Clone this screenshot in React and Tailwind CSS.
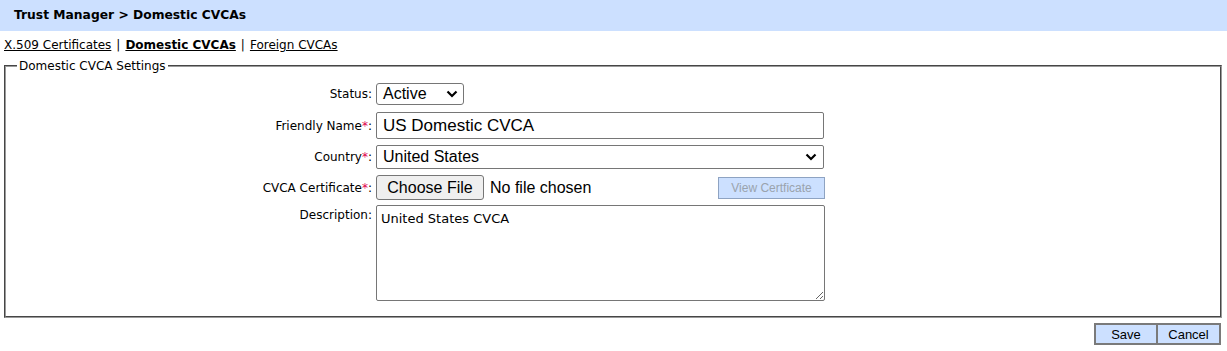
import { useState } from "react";

const labelFont = { fontFamily: "Tahoma, 'DejaVu Sans', sans-serif" };
const arial = { fontFamily: "'Liberation Sans', Arial, sans-serif" };

const Req = () => <span className="text-[#e0004d]">*</span>;

const Row = ({ label, required, top, children }) => (
  <div className={`flex ${top ? "items-start" : "items-center"}`}>
    <div className={`w-[359px] shrink-0 pr-[4px] text-right text-[12px] text-black ${top ? "pt-[1px]" : ""}`}>
      {label}
      {required && <Req />}:
    </div>
    <div className="w-[449px]">{children}</div>
  </div>
);

const Chevron = () => (
  <svg width="12" height="8" viewBox="0 0 12 8" className="shrink-0">
    <path d="M1.5 1.5 L6 6 L10.5 1.5" fill="none" stroke="#000" strokeWidth="2.2" />
  </svg>
);

export default function App() {
  const [name, setName] = useState("US Domestic CVCA");
  const [desc, setDesc] = useState("United States CVCA");

  return (
    <div className="w-[1227px] h-[351px] bg-white" style={labelFont}>
      <div className="h-[31px] bg-[#cce0ff] flex items-center pl-[14px] text-[12.3px] font-bold text-black">
        Trust Manager &gt; Domestic CVCAs
      </div>

      <div className="pl-[4px] pt-[5px] h-[26px] text-[12px] text-black">
        <a className="underline">X.509 Certificates</a>
        <span className="px-[5px]">|</span>
        <a className="underline font-bold">Domestic CVCAs</a>
        <span className="px-[5px]">|</span>
        <a className="underline">Foreign CVCAs</a>
      </div>

      <fieldset className="ml-[4px] mr-[5px] border-2 [border-style:groove] border-[#9a9a9a] px-[11px] pb-[15px] pt-[8px]">
        <legend className="px-[2px] text-[12px] text-black">Domestic CVCA Settings</legend>

        <div className="flex flex-col">
          <Row label="Status">
            <div className="w-[88px] h-[22px] border border-[#767676] rounded-[3px] flex items-center justify-between pl-[6px] pr-[5px] text-[16px]" style={arial}>
              <span>Active</span>
              <Chevron />
            </div>
          </Row>

          <div className="mt-[7px]">
            <Row label="Friendly Name" required>
              <input
                value={name}
                onChange={(e) => setName(e.target.value)}
                className="w-[448px] h-[27px] border border-[#767676] rounded-[2px] px-[6px] text-[17px] outline-none"
                style={arial}
              />
            </Row>
          </div>

          <div className="mt-[6px]">
            <Row label="Country" required>
              <div className="w-[448px] h-[24px] border border-[#767676] rounded-[2px] flex items-center justify-between pl-[6px] pr-[6px] text-[16px]" style={arial}>
                <span>United States</span>
                <Chevron />
              </div>
            </Row>
          </div>

          <div className="mt-[6px]">
            <Row label="CVCA Certificate" required>
              <div className="flex items-center justify-between" style={arial}>
                <div className="flex items-center text-[16px]">
                  <button className="h-[25px] w-[108px] bg-[#efefef] border border-[#767676] rounded-[3px]">Choose File</button>
                  <span className="ml-[6px]">No file chosen</span>
                </div>
                <button disabled className="h-[22px] w-[107px] bg-[#cce0ff] border border-[#8ea3c2] text-[12px] text-[#9aa3ad]">
                  View Certficate
                </button>
              </div>
            </Row>
          </div>

          <div className="mt-[5px]">
            <Row label="Description" top>
              <textarea
                value={desc}
                onChange={(e) => setDesc(e.target.value)}
                className="block w-[449px] h-[96px] border border-[#767676] rounded-[2px] px-[4px] py-[3px] text-[13px] outline-none"
                style={labelFont}
              />
            </Row>
          </div>
        </div>
      </fieldset>

      <div className="flex justify-end mr-[6px] mt-[5px]" style={arial}>
        <button className="w-[64px] h-[22px] bg-[#cce0ff] border-2 border-[#7a7a7a] text-[13px] text-black">Save</button>
        <button className="w-[63px] h-[22px] bg-[#cce0ff] border-2 border-l-0 border-[#7a7a7a] text-[13px] text-black">Cancel</button>
      </div>
    </div>
  );
}
